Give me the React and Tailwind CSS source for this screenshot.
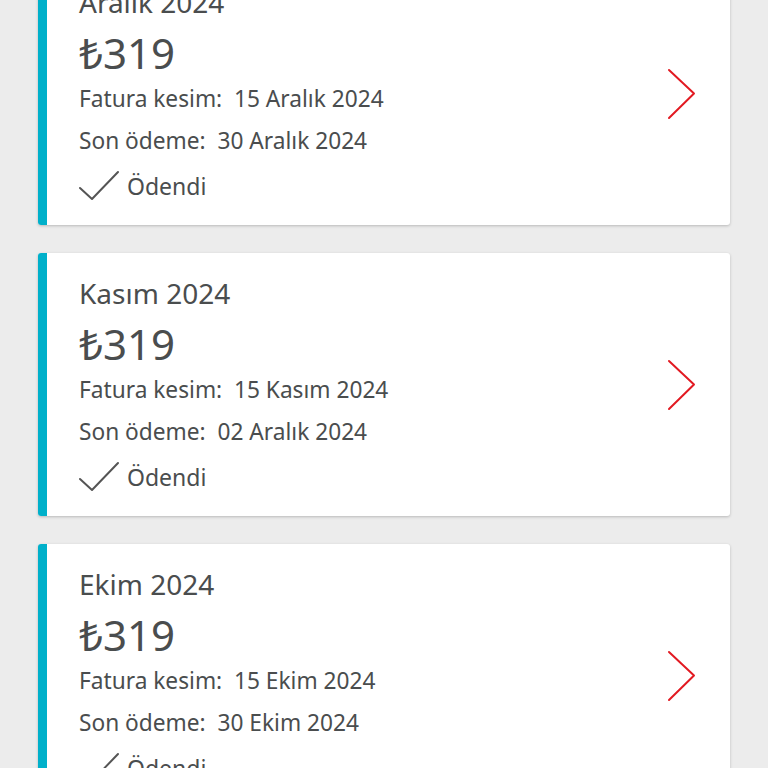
import React from "react";

const bills = [
  { title: "Aralık 2024", kesim: "15 Aralık 2024", son: "30 Aralık 2024" },
  { title: "Kasım 2024", kesim: "15 Kasım 2024", son: "02 Aralık 2024" },
  { title: "Ekim 2024", kesim: "15 Ekim 2024", son: "30 Ekim 2024" },
];

function Card({ b }) {
  return (
    <div className="flex h-[263px] shrink-0 rounded-[3px] bg-white shadow-[0_1px_3px_rgba(0,0,0,0.22)] overflow-hidden">
      <div className="w-[9px] shrink-0 bg-[#00b0ca]" />
      <div className="flex flex-1 items-center pl-[32px] pr-[33px]">
        <div className="flex flex-1 flex-col self-stretch pt-[22px] text-[#4a4d4e]">
          <div className="text-[28px] leading-[36px]">{b.title}</div>
          <div className="mt-[7px] text-[42px] leading-[52px]">₺319</div>
          <div className="mt-[2px] text-[22.7px] leading-[36px]">
            Fatura kesim:&nbsp; {b.kesim}
          </div>
          <div className="mt-[6px] text-[22.7px] leading-[36px]">
            Son ödeme:&nbsp; {b.son}
          </div>
          <div className="mt-[9px] flex h-[36px] items-center gap-[8px]">
            <svg width="40" height="32" viewBox="0 0 40 32" fill="none">
              <polyline
                points="1,18 13,29 39,2"
                stroke="#555"
                strokeWidth="2"
                strokeLinecap="round"
                strokeLinejoin="round"
              />
            </svg>
            <span className="text-[23px] leading-[36px]">Ödendi</span>
          </div>
        </div>
        <svg width="30" height="52" viewBox="0 0 30 52" fill="none">
          <polyline
            points="2,2 27,25.5 2,50"
            stroke="#e21a22"
            strokeWidth="2"
            strokeLinecap="round"
            strokeLinejoin="round"
          />
        </svg>
      </div>
    </div>
  );
}

export default function App() {
  return (
    <div
      className="h-[768px] w-[768px] overflow-hidden bg-[#ececec]"
      style={{ fontFamily: '"Noto Sans", sans-serif' }}
    >
      <div className="-mt-[38px] flex flex-col gap-[28px] px-[38px]">
        {bills.map((b) => (
          <Card key={b.title} b={b} />
        ))}
      </div>
    </div>
  );
}
